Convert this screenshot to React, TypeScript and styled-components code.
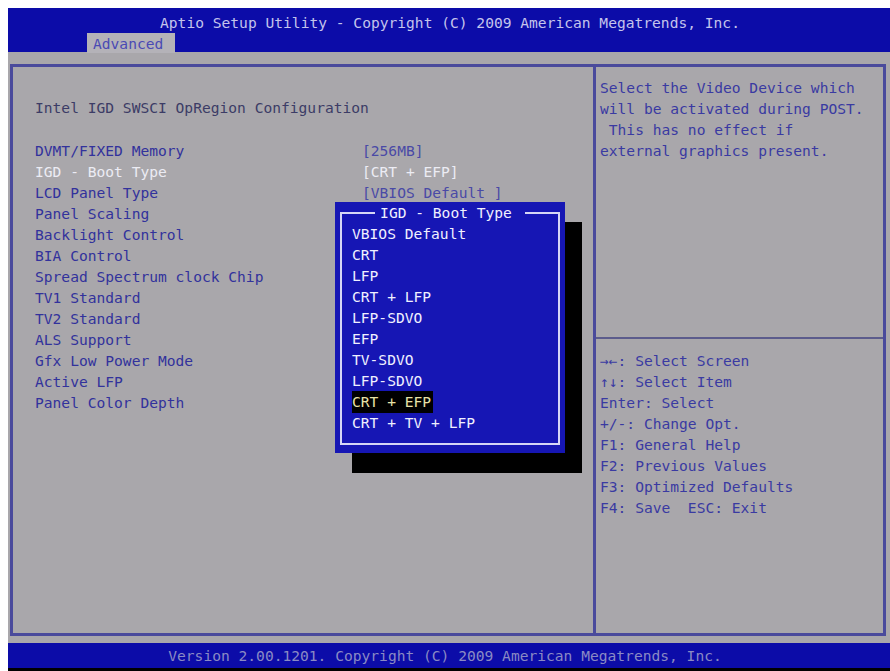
import React from 'react'
import styled, { createGlobalStyle } from 'styled-components'

const colors = {
  blue: '#0c0ca8',
  grey: '#a9a7ab',
  tab: '#b4b2b8',
  item: '#32329c',
  heading: '#3c3c66',
  value: '#4a4aa6',
  selected: '#ececf4',
  help: '#3a3aa2',
  border: '#4a4a9c',
  popup: '#1616b4',
  popupText: '#f0f0ff',
  highlight: '#e8e2a8',
  footerText: '#8a8ac4',
}

const GlobalStyle = createGlobalStyle`
  html, body {
    margin: 0;
    background: #fff;
  }
  body {
    padding: 8px 0 0 8px;
    font-family: "DejaVu Sans Mono", "Liberation Mono", monospace;
    font-size: 14.6px;
  }
`

const Screen = styled.div`
  width: 882px;
  height: 663px;
  background: ${colors.grey};
  display: flex;
  flex-direction: column;
`

const Header = styled.div`
  height: 44px;
  background: ${colors.blue};
  display: flex;
  flex-direction: column;
`

const Title = styled.div`
  height: 25px;
  line-height: 29px;
  text-align: center;
  color: #c4c4ec;
  padding-left: 2px;
`

const Tab = styled.div`
  margin-left: 79px;
  margin-top: auto;
  width: 88px;
  height: 20px;
  line-height: 21px;
  background: ${colors.tab};
  color: #4a4ab4;
  padding-left: 6px;
  box-sizing: border-box;
`

const Panel = styled.div`
  margin: 12px 4px 0 2px;
  height: 572px;
  border: 3px solid ${colors.border};
  box-sizing: border-box;
  display: grid;
  grid-template-columns: 583px 1fr;
`

const Main = styled.div`
  position: relative;
  padding: 30px 0 0 22px;
  border-right: 3px solid ${colors.border};
`

const Heading = styled.div`
  height: 21px;
  line-height: 21px;
  color: ${colors.heading};
  margin-bottom: 22px;
`

const Row = styled.div`
  display: grid;
  grid-template-columns: 327px auto;
  height: 21px;
  line-height: 21px;
`

const Label = styled.span<{ $active?: boolean }>`
  color: ${(p) => (p.$active ? colors.selected : colors.item)};
  white-space: pre;
`

const Value = styled.span<{ $active?: boolean }>`
  color: ${(p) => (p.$active ? colors.selected : colors.value)};
  white-space: pre;
`

const Popup = styled.div`
  position: absolute;
  left: 322px;
  top: 135px;
  width: 230px;
  height: 251px;
  background: ${colors.popup};
  box-shadow: 17px 20px 0 #000;
  padding: 0 5px 8px 5px;
  box-sizing: border-box;
  display: flex;
`

const Frame = styled.fieldset`
  flex: 1;
  margin: 0;
  padding: 0;
  border: 2px solid #d6d6f6;
  min-width: 0;
`

const Legend = styled.legend`
  margin: 0 auto;
  padding: 0 9px;
  color: ${colors.popupText};
  line-height: 21px;
  position: relative;
  left: -4px;
`

const Option = styled.div<{ $active?: boolean }>`
  height: 21px;
  line-height: 21px;
  padding-left: 10px;
  color: ${(p) => (p.$active ? colors.highlight : colors.popupText)};
  span {
    background: ${(p) => (p.$active ? '#000' : 'transparent')};
    padding: 2px 2px 3px 0;
    white-space: pre;
  }
`

const Side = styled.div`
  display: flex;
  flex-direction: column;
  padding-left: 4px;
`

const HelpTop = styled.div`
  height: 272px;
  padding-top: 10px;
  box-sizing: border-box;
  margin-left: -4px;
  padding-left: 4px;
  border-bottom: 2px solid #5c5c8c;
`

const HelpLine = styled.div`
  height: 21px;
  line-height: 21px;
  color: ${colors.help};
  white-space: pre;
`

const Keys = styled.div`
  padding-top: 11px;
`

const Footer = styled.div`
  margin-top: 7px;
  height: 25px;
  line-height: 25px;
  background: ${colors.blue};
  color: ${colors.footerText};
  text-align: center;
  padding-right: 8px;
  border-bottom: 3px solid #000;
`

const items: [string, string?][] = [
  ['DVMT/FIXED Memory', '[256MB]'],
  ['IGD - Boot Type', '[CRT + EFP]'],
  ['LCD Panel Type', '[VBIOS Default ]'],
  ['Panel Scaling'],
  ['Backlight Control'],
  ['BIA Control'],
  ['Spread Spectrum clock Chip'],
  ['TV1 Standard'],
  ['TV2 Standard'],
  ['ALS Support'],
  ['Gfx Low Power Mode'],
  ['Active LFP'],
  ['Panel Color Depth'],
]

const options = [
  'VBIOS Default',
  'CRT',
  'LFP',
  'CRT + LFP',
  'LFP-SDVO',
  'EFP',
  'TV-SDVO',
  'LFP-SDVO',
  'CRT + EFP',
  'CRT + TV + LFP',
]

const help = [
  'Select the Video Device which',
  'will be activated during POST.',
  ' This has no effect if',
  'external graphics present.',
]

const keys = [
  '→←: Select Screen',
  '↑↓: Select Item',
  'Enter: Select',
  '+/-: Change Opt.',
  'F1: General Help',
  'F2: Previous Values',
  'F3: Optimized Defaults',
  'F4: Save  ESC: Exit',
]

function App() {
  return (
    <>
      <GlobalStyle />
      <Screen>
        <Header>
          <Title>Aptio Setup Utility - Copyright (C) 2009 American Megatrends, Inc.</Title>
          <Tab>Advanced</Tab>
        </Header>
        <Panel>
          <Main>
            <Heading>Intel IGD SWSCI OpRegion Configuration</Heading>
            {items.map(([label, value], i) => (
              <Row key={label}>
                <Label $active={i === 1}>{label}</Label>
                {value && <Value $active={i === 1}>{value}</Value>}
              </Row>
            ))}
            <Popup>
              <Frame>
                <Legend>IGD - Boot Type</Legend>
                {options.map((opt, i) => (
                  <Option key={i} $active={i === 8}>
                    <span>{opt}</span>
                  </Option>
                ))}
              </Frame>
            </Popup>
          </Main>
          <Side>
            <HelpTop>
              {help.map((line) => (
                <HelpLine key={line}>{line}</HelpLine>
              ))}
            </HelpTop>
            <Keys>
              {keys.map((line) => (
                <HelpLine key={line}>{line}</HelpLine>
              ))}
            </Keys>
          </Side>
        </Panel>
        <Footer>Version 2.00.1201. Copyright (C) 2009 American Megatrends, Inc.</Footer>
      </Screen>
    </>
  )
}

export default App
